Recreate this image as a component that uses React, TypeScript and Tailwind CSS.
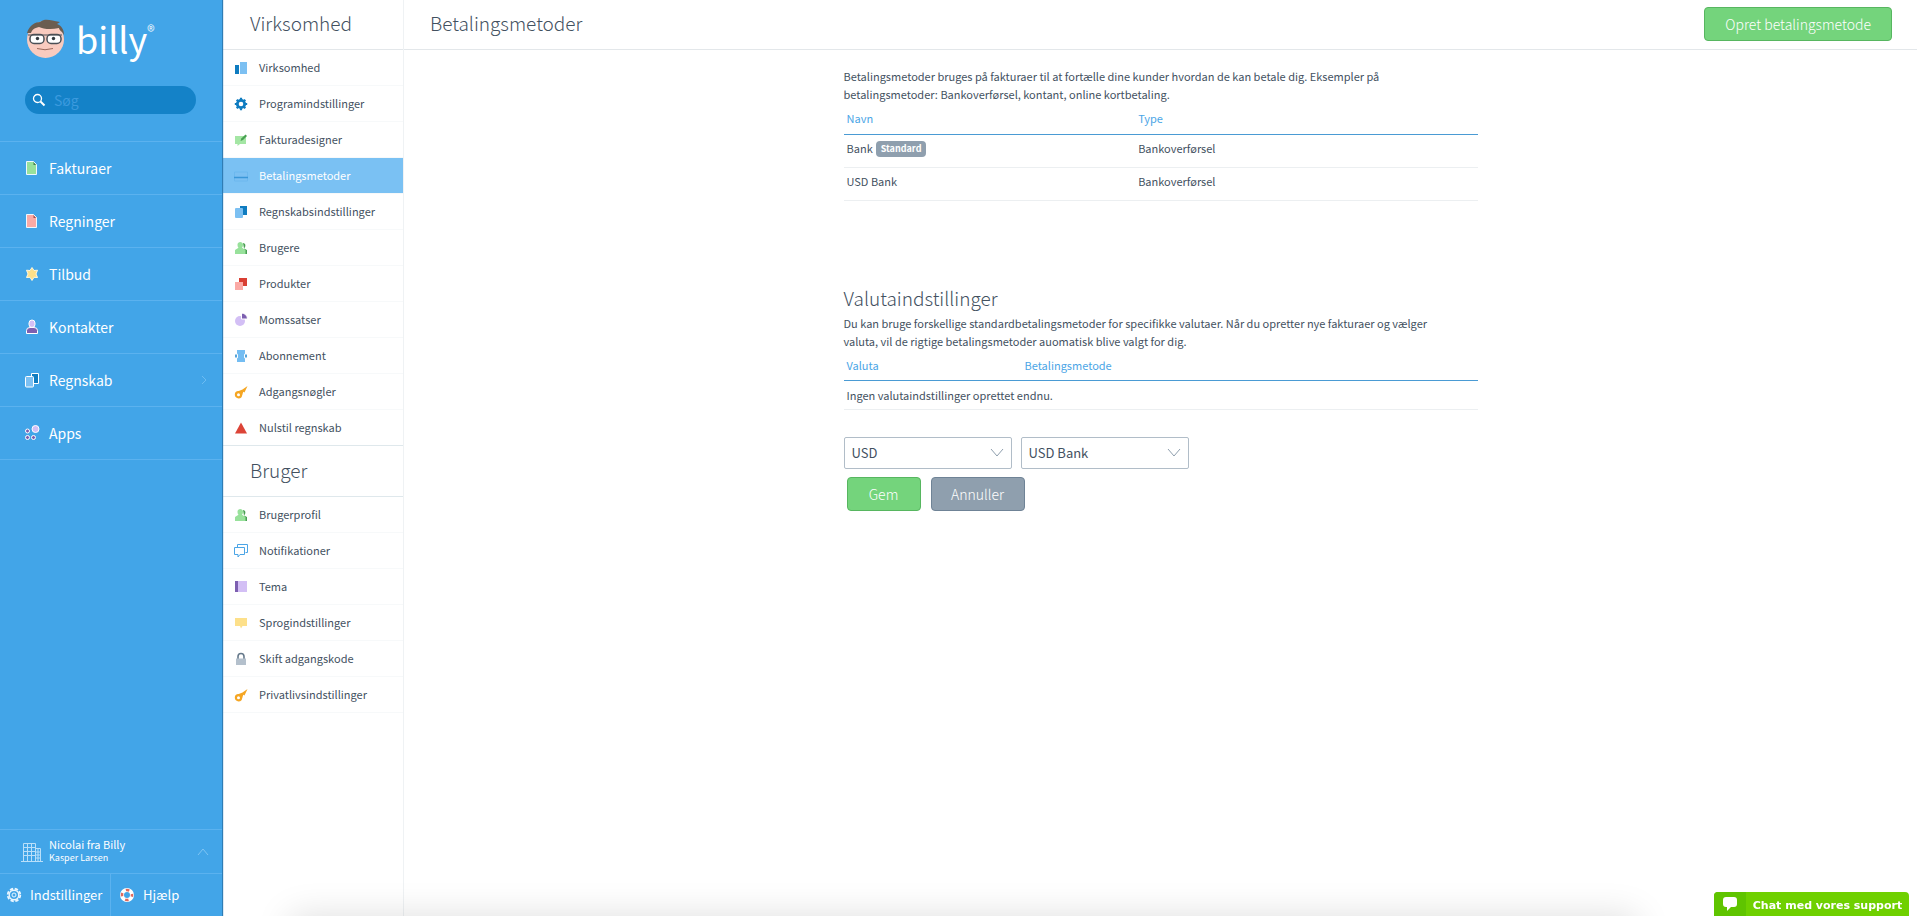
import React from 'react';

const companyItems = [
  { label: 'Virksomhed', icon: 'company' },
  { label: 'Programindstillinger', icon: 'cog' },
  { label: 'Fakturadesigner', icon: 'designer' },
  { label: 'Betalingsmetoder', icon: 'card' },
  { label: 'Regnskabsindstillinger', icon: 'books' },
  { label: 'Brugere', icon: 'users' },
  { label: 'Produkter', icon: 'products' },
  { label: 'Momssatser', icon: 'pie' },
  { label: 'Abonnement', icon: 'ticket' },
  { label: 'Adgangsnøgler', icon: 'key' },
  { label: 'Nulstil regnskab', icon: 'triangle' },
];

const userItems = [
  { label: 'Brugerprofil', icon: 'users' },
  { label: 'Notifikationer', icon: 'chat' },
  { label: 'Tema', icon: 'theme' },
  { label: 'Sprogindstillinger', icon: 'speech' },
  { label: 'Skift adgangskode', icon: 'lock' },
  { label: 'Privatlivsindstillinger', icon: 'key' },
];

const mainItems = [
  { label: 'Fakturaer', icon: 'invoice' },
  { label: 'Regninger', icon: 'bill' },
  { label: 'Tilbud', icon: 'star' },
  { label: 'Kontakter', icon: 'contact' },
  { label: 'Regnskab', icon: 'accounting' },
  { label: 'Apps', icon: 'apps' },
];

const methods = [
  { name: 'Bank', type: 'Bankoverførsel', standard: true },
  { name: 'USD Bank', type: 'Bankoverførsel', standard: false },
];

const menuIcons: Record<string, React.ReactNode> = {
  company: (
    <>
      <path d="M1 4h4v9H1z" fill="#0f7cc0" />
      <path d="M6 1h7v12H6z" fill="#7cc0f2" />
    </>
  ),
  cog: (
    <>
      <circle cx="7" cy="7" r="3.7" fill="none" stroke="#0f7cc0" strokeWidth="2.8" />
      <path d="M7 .8v2M7 11.2v2M.8 7h2M11.2 7h2M2.7 2.7l1.3 1.3M10 10l1.3 1.3M2.7 11.3L4 10M10 4l1.3-1.3" stroke="#0f7cc0" strokeWidth="2.2" />
    </>
  ),
  designer: (
    <>
      <path d="M1 3h11v8H6l-2.500 2V11H1z" fill="#a4e6a4" />
      <path d="M6.500 8l.8-2.500L11.500 1.500 13 3 9 7z" fill="#49a052" />
    </>
  ),
  card: (
    <>
      <path d="M.5 3h13v9H.5z" fill="#7cc0f2" stroke="#6cb8ee" />
      <path d="M0 8.500h14" stroke="#3a97d8" strokeWidth="1.500" />
    </>
  ),
  books: (
    <>
      <path d="M6 1h7v9H6z" fill="#0f7cc0" />
      <rect x="1" y="3" width="8" height="10" rx="1" fill="#7cc0f2" />
    </>
  ),
  users: (
    <>
      <path d="M9 2c3 0 3 4 1 5.500l3 1.500v4h-2z" fill="#49a052" />
      <path d="M3.500 3.500c0-3.500 5.500-3.500 5.500 0 0 2-.5 2.800-1 3.300L11.500 9v4H1V9l3.500-2.200c-.5-.5-1-1.300-1-3.300z" fill="#98e19b" />
    </>
  ),
  products: (
    <>
      <path d="M5 1h8v8H5z" fill="#d93f33" />
      <path d="M1 5h8v8H1z" fill="#fbaaa5" />
    </>
  ),
  pie: (
    <>
      <circle cx="6" cy="8" r="5" fill="#d3bff5" />
      <path d="M7.500 0v6H13.500A6 6 0 0 0 7.500 0z" fill="#7d5fb0" stroke="#fff" />
    </>
  ),
  ticket: (
    <>
      <path d="M3 1h8v3.500c-1 .5-1 1-1 2.500s0 2 1 2.500V13H3V9.500c1-.5 1-1 1-2.500s0-2-1-2.500z" fill="#74bdf2" />
      <path d="M2 5.500v3M12 5.500v3" stroke="#2186cd" strokeWidth="1.500" />
    </>
  ),
  key: (
    <>
      <path d="M13.500 1L10.500 7.500 9.300 6.800 8 10.500 3.500 6.500 8.500 4.500z" fill="#f5a623" />
      <circle cx="4.500" cy="9.700" r="2.600" fill="#fff" stroke="#f5a623" strokeWidth="2.200" />
    </>
  ),
  triangle: <path d="M7 1.500L13 12.500H1z" fill="#dc4437" />,
  chat: (
    <>
      <path d="M3.500 3V.5h10v8H11.500" fill="none" stroke="#4ba5e6" />
      <path d="M.5 3.500h10v7H6l-2 2.500v-2.500H.5z" fill="#fff" stroke="#4ba5e6" />
    </>
  ),
  theme: (
    <>
      <path d="M1 1h3v11H1z" fill="#7d5fb0" />
      <path d="M4 1h9v11H4z" fill="#d3bff5" />
    </>
  ),
  speech: <path d="M1 2h12v8H8.500L7 12.500 6 10H1z" fill="#fde08a" />,
  lock: (
    <>
      <path d="M4 7V4.500C4 .5 10 .5 10 4.500V7" fill="none" stroke="#66798b" strokeWidth="1.600" />
      <path d="M2 6.500h10V13H2z" fill="#b4c0cc" />
    </>
  ),
};

const sideIcons: Record<string, React.ReactNode> = {
  invoice: (
    <>
      <path d="M2.500 1.500h7l3 3v10h-10z" fill="#98e19b" stroke="#eef8ff" />
      <path d="M9.500 2l2.500 3H9.500z" fill="#47784e" />
    </>
  ),
  bill: (
    <>
      <path d="M2.500 1.500h7l3 3v10h-10z" fill="#fbaaa5" stroke="#eef8ff" />
      <path d="M9.500 2l2.500 3H9.500z" fill="#a0514c" />
    </>
  ),
  star: <path d="M8 1.500l2 3 3.500-.3L12 8l1.500 3.500-3.500-.2L8 14.500 6 11.300l-3.500.2L4 8 2.500 4.200 6 4.500z" fill="#fde08a" stroke="#fff8dd" />,
  contact: (
    <>
      <path d="M2.500 14.500v-3q0-3 3.500-3h4q3.500 0 3.500 3v3z" fill="#7d5fb0" stroke="#fff" />
      <rect x="5" y="1" width="6" height="7.500" rx="3" fill="#d3bff5" stroke="#fff" />
    </>
  ),
  accounting: (
    <>
      <path d="M7.500 1.500h7v10h-7z" fill="#0f7cc0" stroke="#fff" />
      <rect x="1.500" y="4.500" width="8" height="10.500" rx="1" fill="#7cc0f2" stroke="#fff" />
    </>
  ),
  apps: (
    <>
      <g fill="#7d5fb0" stroke="#fff">
        <circle cx="3.500" cy="6" r="2" />
        <circle cx="3.500" cy="12.500" r="2" />
        <circle cx="9.500" cy="12.500" r="2" />
      </g>
      <circle cx="11.500" cy="4" r="3.500" fill="#d3bff5" stroke="#fff" />
    </>
  ),
};

const Logo: React.FC = () => (
  <a href="#" className="flex items-center gap-[11px] text-white" aria-label="billy">
    <svg width="40" height="40" viewBox="0 0 40 40">
      <circle cx="20.500" cy="20.500" r="18.500" fill="#f9cbbf" />
      <path d="M2 14C4 6 11 3 15 3c5-4 10-2 20 0l-3 2c5 2 7 6 7 11l-2-3c-3-2-3-4-3-4-8 2-16 1-20-1-5 1-7 3-8 6z" fill="#6b5d50" />
      <rect x="5" y="15.500" width="14" height="9" rx="4" fill="#fff" stroke="#4a4f55" strokeWidth="1.500" />
      <rect x="22" y="15.500" width="14" height="9" rx="4" fill="#fff" stroke="#4a4f55" strokeWidth="1.500" />
      <path d="M3 16h34" stroke="#4a4f55" />
      <circle cx="12.500" cy="19.500" r="1.700" fill="#333a40" />
      <circle cx="28.500" cy="19.500" r="1.700" fill="#333a40" />
      <path d="M12 29.500q8 2.500 16 0" fill="none" stroke="#9b6a5c" />
    </svg>
    <span className="flex items-start pb-0.5">
      <span className="text-4xl leading-[44px]">billy</span>
      <span className="pt-[6px] text-base leading-4 font-light">®</span>
    </span>
  </a>
);

const Sidebar: React.FC = () => (
  <aside className="z-10 flex w-[222px] shrink-0 flex-col bg-[#42a5e8] text-white shadow-[1px_0_1px_#2f7db5]">
    <div className="px-[25px] pt-4">
      <Logo />
    </div>
    <label className="mr-[26px] ml-[25px] mt-6 flex h-7 items-center gap-2 rounded-full bg-[#1482c8] pl-[7px]">
      <svg width="14" height="14" viewBox="0 0 14 14" fill="none" stroke="#fff">
        <circle cx="5.500" cy="5.500" r="4" strokeWidth="1.300" />
        <path d="M8.500 8.500l4 4" strokeWidth="2" />
      </svg>
      <input type="text" aria-label="Søg" placeholder="Søg" className="w-32 bg-transparent text-sm outline-none placeholder:text-[#3b9ade]" />
    </label>
    <nav className="mt-[27px] border-t border-[#5bb2ef]">
      {mainItems.map((item) => (
        <a key={item.label} href="#" className="flex h-[53px] items-center gap-[9px] border-b border-[#5bb2ef] pr-[14px] pl-6 text-sm">
          <svg width="16" height="16" viewBox="0 0 16 16">{sideIcons[item.icon]}</svg>
          <span className="grow">{item.label}</span>
          {item.label === 'Regnskab' && (
            <svg width="8" height="12" viewBox="0 0 8 12" fill="none" stroke="#6cbcf2">
              <path d="M2 2l4 4-4 4" />
            </svg>
          )}
        </a>
      ))}
    </nav>
    <button type="button" className="mt-auto flex h-11 items-center border-t border-[#5bb2ef] pr-3 pl-5 text-left">
      <svg width="24" height="22" viewBox="0 0 24 22" fill="none" stroke="#b9dff9">
        <path d="M3.500 20V2.500h12V20M7.500 2.500V20M11.500 2.500V20M3.500 6.500h12M3.500 10.500h12M3.500 14.500h12M15.500 7.500h5V20M18 7.500V20M15.500 11h5M15.500 14h5M15.500 17h5M1 20.500h22" />
      </svg>
      <span className="ml-[5px] grow pb-0.5">
        <span className="block text-[11px] leading-[14px]">Nicolai fra Billy</span>
        <span className="block text-[9px] leading-[14px]">Kasper Larsen</span>
      </span>
      <svg width="14" height="10" viewBox="0 0 14 10" fill="none" stroke="#7fc5f4">
        <path d="M2 8l5-6 5 6" />
      </svg>
    </button>
    <div className="flex h-[43px] border-t border-[#5bb2ef] text-[13px]">
      <a href="#" className="flex w-[111px] items-center gap-2 border-r border-[#5bb2ef] pl-1.5">
        <svg className="shrink-0" width="16" height="16" viewBox="0 0 16 16" fill="none" stroke="#eaf6ff">
          <circle cx="8" cy="8" r="6.300" strokeWidth="1.800" strokeDasharray="3.300 1.650" />
          <circle cx="8" cy="8" r="4.800" strokeWidth="1.500" />
          <circle cx="8" cy="8" r="2" />
        </svg>
        Indstillinger
      </a>
      <a href="#" className="flex items-center gap-2 pl-2">
        <svg className="shrink-0" width="16" height="16" viewBox="0 0 16 16" fill="none">
          <circle cx="8" cy="8" r="5" stroke="#fff" strokeWidth="4" />
          <circle cx="8" cy="8" r="5" stroke="#e06a5e" strokeWidth="2.500" strokeDasharray="3.500 4.350" strokeDashoffset="1.750" />
        </svg>
        Hjælp
      </a>
    </div>
  </aside>
);

const MenuList: React.FC<{ items: { label: string; icon: string }[] }> = ({ items }) => (
  <nav>
    {items.map((item) => {
      const active = item.label === 'Betalingsmetoder';
      return (
        <a
          key={item.label}
          href="#"
          className={
            active
              ? 'flex h-9 items-center gap-[11px] border-b border-[#f7f9fa] bg-[#7ac1f3] pl-3 text-[11px] text-white'
              : 'flex h-9 items-center gap-[11px] border-b border-[#f7f9fa] pl-3 text-[11px]'
          }
        >
          <svg width="14" height="14" viewBox="0 0 14 14">{menuIcons[item.icon]}</svg>
          <span className="pb-px">{item.label}</span>
        </a>
      );
    })}
  </nav>
);

const Dropdown: React.FC<{ label: string; value: string }> = ({ label, value }) => (
  <div className="grid w-[168px] items-center">
    <select aria-label={label} className="col-start-1 row-start-1 h-8 appearance-none rounded-xs border border-[#b1bdc8] bg-white px-[7px]">
      <option>{value}</option>
    </select>
    <svg className="pointer-events-none col-start-1 row-start-1 mr-2 justify-self-end" width="14" height="10" viewBox="0 0 14 10" fill="none" stroke="#8f9fae">
      <path d="M1 1l6 7 6-7" />
    </svg>
  </div>
);

const App: React.FC = () => {
  return (
    <div className="flex min-h-screen bg-white font-['Noto_Sans_CJK_SC','Noto_Sans',sans-serif] text-[#43515f]">
      <Sidebar />
      <aside className="w-[182px] shrink-0 border-r border-[#eff2f4]">
        <h2 className="flex h-[50px] items-center border-b border-[#e3e7ea] pb-0.5 pl-7 text-[19px] font-light">Virksomhed</h2>
        <MenuList items={companyItems} />
        <h2 className="flex h-[51px] items-center border-b border-[#dfe8ec] pb-0.5 pl-7 text-[19px] font-light shadow-[0_-1px_0_#dfe8ec]">Bruger</h2>
        <MenuList items={userItems} />
      </aside>
      <div className="grow">
        <header className="flex h-[50px] items-center justify-between border-b border-[#e3e7ea] pr-[25px] pb-0.5 pl-[26px]">
          <h1 className="text-[19px] font-light">Betalingsmetoder</h1>
          <button type="button" className="h-[34px] rounded-sm border border-[#57b660] bg-[#74d47c] px-5 text-sm font-light text-white">
            Opret betalingsmetode
          </button>
        </header>
        <main className="mx-auto max-w-[634px] pt-[17px] text-[11px]">
          <p className="pr-10 leading-[18px]">
            Betalingsmetoder bruges på fakturaer til at fortælle dine kunder hvordan de kan betale dig. Eksempler på betalingsmetoder: Bankoverførsel, kontant, online kortbetaling.
          </p>
          <table className="w-full table-fixed text-left">
            <thead>
              <tr className="h-[31px] border-b border-[#4a9bd4] text-[#4ba5e6]">
                <th className="w-[46%] px-[3px] font-normal">Navn</th>
                <th className="px-[3px] font-normal">Type</th>
              </tr>
            </thead>
            <tbody>
              {methods.map((method) => (
                <tr key={method.name} className="h-[33px] border-b border-[#eceff1]">
                  <td className="px-[3px] pb-1">
                    <span className="flex items-center gap-[3px]">
                      {method.name}
                      {method.standard && (
                        <span className="rounded-sm bg-[#8f9fae] px-[5px] text-[9px] leading-4 font-bold text-white">Standard</span>
                      )}
                    </span>
                  </td>
                  <td className="px-[3px] pb-1">{method.type}</td>
                </tr>
              ))}
            </tbody>
          </table>

          <h2 className="mt-[83px] mb-0.5 text-[19px] leading-7 font-light">Valutaindstillinger</h2>
          <p className="pr-6 leading-[18px]">
            Du kan bruge forskellige standardbetalingsmetoder for specifikke valutaer. Når du opretter nye fakturaer og vælger valuta, vil de rigtige betalingsmetoder auomatisk blive valgt for dig.
          </p>
          <table className="w-full table-fixed text-left">
            <thead>
              <tr className="h-[31px] border-b border-[#4a9bd4] text-[#4ba5e6]">
                <th className="w-[178px] px-[3px] font-normal">Valuta</th>
                <th className="px-[3px] font-normal">Betalingsmetode</th>
              </tr>
            </thead>
            <tbody>
              <tr className="h-[29px] border-b border-[#eceff1]">
                <td colSpan={2} className="px-[3px]">Ingen valutaindstillinger oprettet endnu.</td>
              </tr>
            </tbody>
          </table>

          <form className="mt-[27px]">
            <div className="flex gap-[9px] text-[13px]">
              <Dropdown label="Valuta" value="USD" />
              <Dropdown label="Betalingsmetode" value="USD Bank" />
            </div>
            <div className="mt-2 flex gap-[10px] pl-[3px] text-sm font-light text-white">
              <button type="button" className="h-[34px] w-[74px] rounded-sm border border-[#57b660] bg-[#74d47c]">Gem</button>
              <button type="button" className="h-[34px] w-[94px] rounded-sm border border-[#6f8396] bg-[#8f9fae]">Annuller</button>
            </div>
          </form>
        </main>
      </div>
      <div className="pointer-events-none fixed right-[280px] -bottom-10 left-[290px] h-10 shadow-[0_0_36px_#00000022]" />
      <button type="button" className="fixed right-2 bottom-0 flex h-6 w-[195px] overflow-hidden rounded-t bg-[#6fd000] font-['DejaVu_Sans',sans-serif] text-[11px] font-bold text-white">
        <span className="flex h-full w-8 items-center justify-center bg-[#5fc400]">
          <svg width="14" height="14" viewBox="0 0 14 14" fill="#fff">
            <path d="M3 0h8q3 0 3 3v4q0 3-3 3H8l-4 4v-4H3Q0 10 0 7V3q0-3 3-3z" />
          </svg>
        </span>
        <span className="grow leading-[27px]">Chat med vores support</span>
      </button>
    </div>
  );
};

export default App;
